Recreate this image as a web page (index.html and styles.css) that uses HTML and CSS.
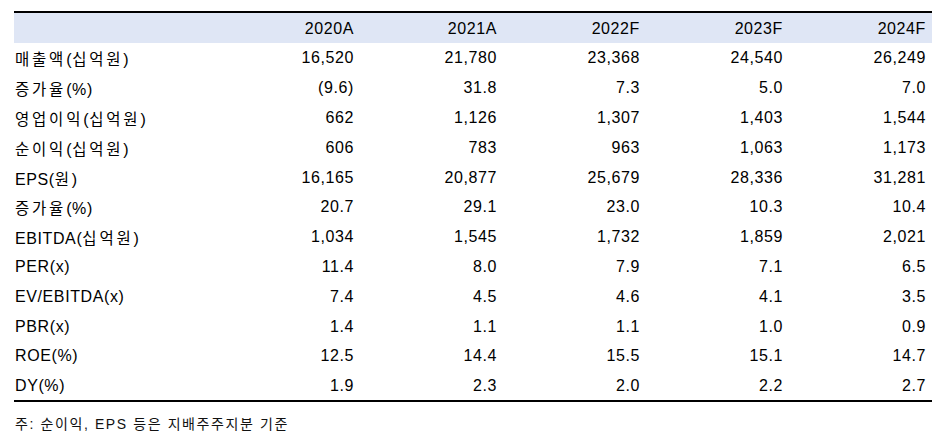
FILE: index.html
```html
<!DOCTYPE html>
<html lang="ko">
<head>
<meta charset="utf-8">
<link rel="stylesheet" href="styles.css">
</head>
<body>
<div class="wrap">
<table class="fin">
  <colgroup>
    <col class="c-label"><col class="c-num"><col class="c-num"><col class="c-num"><col class="c-num"><col class="c-num">
  </colgroup>
  <thead>
    <tr><th></th><th>2020A</th><th>2021A</th><th>2022F</th><th>2023F</th><th>2024F</th></tr>
  </thead>
  <tbody>
    <tr><td><span class="ko">매출액</span>(<span class="ko">십억원</span>)</td><td>16,520</td><td>21,780</td><td>23,368</td><td>24,540</td><td>26,249</td></tr>
    <tr><td><span class="ko">증가율</span>(%)</td><td>(9.6)</td><td>31.8</td><td>7.3</td><td>5.0</td><td>7.0</td></tr>
    <tr><td><span class="ko">영업이익</span>(<span class="ko">십억원</span>)</td><td>662</td><td>1,126</td><td>1,307</td><td>1,403</td><td>1,544</td></tr>
    <tr><td><span class="ko">순이익</span>(<span class="ko">십억원</span>)</td><td>606</td><td>783</td><td>963</td><td>1,063</td><td>1,173</td></tr>
    <tr><td>EPS(<span class="ko">원</span>)</td><td>16,165</td><td>20,877</td><td>25,679</td><td>28,336</td><td>31,281</td></tr>
    <tr><td><span class="ko">증가율</span>(%)</td><td>20.7</td><td>29.1</td><td>23.0</td><td>10.3</td><td>10.4</td></tr>
    <tr><td>EBITDA(<span class="ko">십억원</span>)</td><td>1,034</td><td>1,545</td><td>1,732</td><td>1,859</td><td>2,021</td></tr>
    <tr><td>PER(x)</td><td>11.4</td><td>8.0</td><td>7.9</td><td>7.1</td><td>6.5</td></tr>
    <tr><td>EV/EBITDA(x)</td><td>7.4</td><td>4.5</td><td>4.6</td><td>4.1</td><td>3.5</td></tr>
    <tr><td>PBR(x)</td><td>1.4</td><td>1.1</td><td>1.1</td><td>1.0</td><td>0.9</td></tr>
    <tr><td>ROE(%)</td><td>12.5</td><td>14.4</td><td>15.5</td><td>15.1</td><td>14.7</td></tr>
    <tr><td>DY(%)</td><td>1.9</td><td>2.3</td><td>2.0</td><td>2.2</td><td>2.7</td></tr>
  </tbody>
</table>
<p class="note">주: 순이익, EPS 등은 지배주주지분 기준</p>
</div>
</body>
</html>
```

FILE: styles.css
```css
html, body {
  margin: 0;
  padding: 0;
  background: #ffffff;
}

.wrap {
  padding: 11px 0 0 14px;
}

.fin {
  border-collapse: collapse;
  table-layout: fixed;
  width: 918px;
  border-top: 2px solid #000;
  border-bottom: 2px solid #000;
  font-family: "Liberation Sans", "Noto Sans CJK KR", sans-serif;
  font-size: 16px;
  letter-spacing: 0.6px;
  color: #000;
}

.c-label { width: 203px; }
.c-num { width: 143px; }

.fin th {
  background: #dfe6f5;
  height: 31px;
  padding: 2px 6px 0 0;
  font-weight: normal;
  text-align: right;
  box-sizing: border-box;
}

.fin td {
  height: 29.8px;
  padding: 1px 6px 0 0;
  text-align: right;
  box-sizing: border-box;
  white-space: nowrap;
}

.fin td:first-child {
  text-align: left;
  padding-left: 1px;
}

.ko {
  font-family: "Noto Sans CJK KR", sans-serif;
  font-size: 15.5px;
  letter-spacing: 2.8px;
}

.note {
  margin: 11px 0 0 1px;
  font-family: "Liberation Sans", "Noto Sans CJK KR", sans-serif;
  font-size: 14px;
  letter-spacing: 1.6px;
  color: #111;
}
```
